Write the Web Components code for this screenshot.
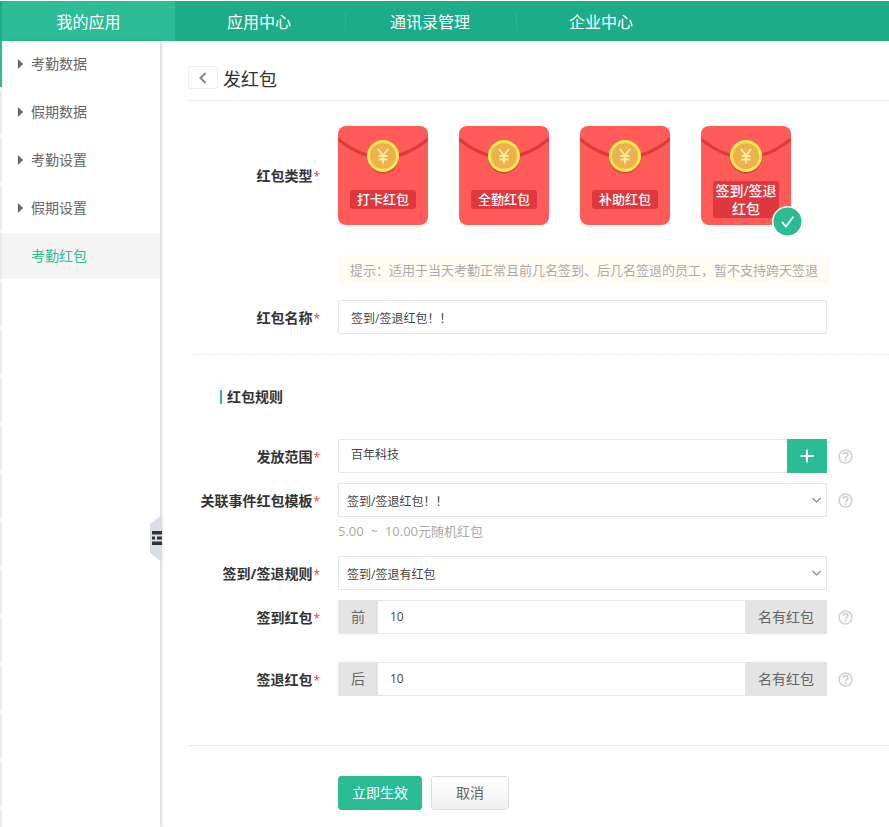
<!DOCTYPE html>
<html lang="zh">
<head>
<meta charset="utf-8">
<title>发红包</title>
<style>
html,body{margin:0;height:100%;overflow:hidden;background:#fff}
body{font:14px "Open Sans","Noto Sans CJK SC",sans-serif;color:#333}
/* centred full-width punctuation, as in the reference */
.p{font-family:"Noto Sans CJK TC",sans-serif}
</style>
</head>
<body>
<app-shell>
  <top-nav slot="nav">
    <nav-item active>我的应用</nav-item>
    <nav-item>应用中心</nav-item>
    <nav-item>通讯录管理</nav-item>
    <nav-item>企业中心</nav-item>
  </top-nav>
  <side-menu slot="menu">
    <side-item arrow>考勤数据</side-item>
    <side-item arrow>假期数据</side-item>
    <side-item arrow>考勤设置</side-item>
    <side-item arrow>假期设置</side-item>
    <side-item active>考勤红包</side-item>
  </side-menu>

  <page-head>发红包</page-head>

  <form-row label="红包类型" required style="margin-top:25px;--lab-shift:-1px">
    <div style="display:flex;gap:31px">
      <red-packet>打卡红包</red-packet>
      <red-packet>全勤红包</red-packet>
      <red-packet>补助红包</red-packet>
      <red-packet checked>签到/签退<br>红包</red-packet>
    </div>
  </form-row>
  <form-row style="margin-top:30px"><hint-box>提示<span class="p">：</span>适用于当天考勤正常且前几名签到、后几名签退的员工<span class="p">，</span>暂不支持跨天签退</hint-box></form-row>
  <form-row label="红包名称" required style="margin-top:15px"><text-field>签到/签退红包<span class="p">！！</span></text-field></form-row>
  <dash-line></dash-line>
  <section-title>红包规则</section-title>

  <form-row label="发放范围" required style="margin-top:35px">
    <text-field plus>百年科技</text-field><help-icon slot="aside"></help-icon>
  </form-row>
  <form-row label="关联事件红包模板" required style="margin-top:10px">
    <select-field>签到/签退红包<span class="p">！！</span></select-field><help-icon slot="aside"></help-icon>
  </form-row>
  <form-row style="margin-top:4px"><note-text>5.00 ~ 10.00元随机红包</note-text></form-row>
  <form-row label="签到/签退规则" required style="margin-top:15px"><select-field>签到/签退有红包</select-field></form-row>
  <form-row label="签到红包" required style="margin-top:10px">
    <addon-field before="前" after="名有红包">10</addon-field><help-icon slot="aside"></help-icon>
  </form-row>
  <form-row label="签退红包" required style="margin-top:28px">
    <addon-field before="后" after="名有红包">10</addon-field><help-icon slot="aside"></help-icon>
  </form-row>

  <form-actions>
    <action-button primary>立即生效</action-button>
    <action-button>取消</action-button>
  </form-actions>
</app-shell>

<script>
// each element: a template string put in an open shadow root
const el = (name, html) => customElements.define(name, class extends HTMLElement {
  constructor() {
    super()
    this.attachShadow({ mode: "open" })
  }
  connectedCallback() {
    this.shadowRoot.innerHTML = typeof html === "function" ? html(this) : html
  }
})

el("app-shell", `
  <style>
    :host{display:grid;grid-template-columns:164px 1fr;grid-template-rows:41px 1fr;height:827px;overflow:hidden}
    .nav{grid-column:1 / -1;display:block}
    main{padding-left:24px;min-width:0}
  </style>
  <div class="nav"><slot name="nav"></slot></div>
  <div><slot name="menu"></slot></div>
  <main><slot></slot></main>`)

el("top-nav", `
  <style>
    :host{display:flex;height:40px;margin-top:1px;padding-left:2px;background:#1cac88}
  </style>
  <slot></slot>`)

el("nav-item", t => `
  <style>
    :host{display:flex;align-items:center;justify-content:center;box-sizing:border-box;height:40px;position:relative;
      color:#fff;font-size:16px;${t.hasAttribute("active") ? "width:173px;background:#2cbd96;" : "width:171px;padding-right:3px;"}}
    :host(:nth-child(n+3))::before{content:"";position:absolute;left:-1px;top:12px;height:18px;width:1px;background:#26b893}
  </style>
  <slot></slot>`)

el("side-menu", `
  <style>
    :host{display:block;position:relative;width:160px;height:786px;box-sizing:border-box;padding-left:2px;background:#fff;
      box-shadow:2px 0 3px rgba(0,0,0,.14)}
    .strip{position:absolute;left:0;top:0;bottom:0;width:2px;
      background:linear-gradient(#2cbd96 46px,transparent 46px),repeating-linear-gradient(#e7eaef 0 46px,#fafbfc 46px 48px)}
    .tab{position:absolute;left:150px;top:474px;display:block}
  </style>
  <div class="strip"></div>
  <slot></slot>
  <svg class="tab" width="12" height="47" viewBox="0 0 12 47">
    <path d="M12 0 0 9V38L12 47Z" fill="#d9dee6"/>
    <path d="M2 16H12V19.5H2ZM2 21.5H5V24.5H2ZM7 21.5H12V24.5H7ZM2 26.5H12V30H2Z" fill="#333"/>
  </svg>`)

el("side-item", t => `
  <style>
    :host{display:block;position:relative;height:46px;margin-bottom:2px;box-sizing:border-box;padding-left:29px;line-height:45px;
      font-size:14px;color:${t.hasAttribute("active") ? "#2cbb96" : "#666"};${t.hasAttribute("active") ? "background:#f4f4f4;" : ""}}
    i{position:absolute;left:16px;top:18px;border-left:5px solid #666;border-top:5px solid transparent;border-bottom:5px solid transparent}
  </style>
  ${t.hasAttribute("arrow") ? "<i></i>" : ""}<slot></slot>`)

el("page-head", `
  <style>
    :host{display:flex;align-items:center;gap:5px;height:23px;padding:25px 0 11px;border-bottom:1px solid #eee;font-size:18px;color:#333}
    .back{flex:none;display:flex;align-items:center;justify-content:center;width:28px;height:21px;border:1px solid #eee;border-radius:2px}
  </style>
  <div class="back"><svg width="10" height="14" viewBox="0 0 10 14"><path d="M7.500 2 2.500 7l5 5" fill="none" stroke="#888" stroke-width="2"/></svg></div>
  <slot></slot>`)

el("form-row", t => `
  <style>
    :host{display:flex;align-items:center}
    .lab{flex:none;width:132px;margin:var(--lab-shift,0px) 18px 0 0;text-align:right;font-weight:700;font-size:14px;color:#333;white-space:nowrap}
    b{color:#f33;font-weight:400;font-size:12px;margin-left:1px}
    .ctl{flex:none;width:489px}
    .aside{margin-left:11px;display:flex}
  </style>
  <div class="lab">${t.getAttribute("label") || ""}${t.hasAttribute("required") ? "<b>*</b>" : ""}</div>
  <div class="ctl"><slot></slot></div>
  <div class="aside"><slot name="aside"></slot></div>`)

el("red-packet", t => {
  const two = t.hasAttribute("checked")
  return `
  <style>
    :host{display:flex;flex:none;position:relative;width:90px;height:99px;box-sizing:border-box;padding-top:48px;
      align-items:center;justify-content:center;background:#ff5b58;border-radius:8px}
    svg.art{position:absolute;left:0;top:0;display:block}
    .tag{position:relative;width:66px;box-sizing:border-box;text-align:center;background:#df373d;border-radius:3px;
      color:#fff;font-size:${two ? "14px" : "13px"};line-height:${two ? "17.5px" : "19px"};font-weight:500;white-space:nowrap;
      ${two ? "padding:1px 0" : ""}}
    .ok{position:absolute;right:-12px;bottom:-12px;display:block}
  </style>
  <svg class="art" width="90" height="99" viewBox="0 0 90 99">
    <path d="M0 13Q45 50 90 13" fill="none" stroke="#e0393b" stroke-width="3"/>
    <circle cx="45" cy="31.500" r="16" fill="#e0393b"/>
    <circle cx="45" cy="30" r="16" fill="#fdec50"/>
    <circle cx="45" cy="30" r="13" fill="#edb04f"/>
    <path d="M40 23 45 29.500 50 23M45 29.500V37.500M40.500 30H49.500M40.500 33.500H49.500" fill="none" stroke="#fdeea0" stroke-width="1.900"/>
  </svg>
  <div class="tag"><slot></slot></div>
  ${two ? `<svg class="ok" width="31" height="31" viewBox="0 0 31 31">
    <circle cx="15.500" cy="15.500" r="15.500" fill="#fff"/><circle cx="15.500" cy="15.500" r="14" fill="#2bbb95"/>
    <path d="M10 16l4 4.500 7.500-10" fill="none" stroke="#fff" stroke-width="1.800"/></svg>` : ""}`
})

el("hint-box", `
  <style>
    :host{display:block;width:492px;height:30px;box-sizing:border-box;padding-left:12px;line-height:29px;background:#fffcf3;color:#aaa;font-size:13px;white-space:nowrap}
  </style>
  <slot></slot>`)

const box = "height:34px;box-sizing:border-box;border:1px solid #e6e6e6;font-size:12px;color:#444;background:#fff;"

el("text-field", t => `
  <style>
    :host{display:flex;${box}border-radius:2px;line-height:${t.hasAttribute("plus") ? "30px" : "33px"};padding-left:12px;position:relative}
    span{flex:1}
    .plus{flex:none;width:40px;height:34px;margin:-1px -1px -1px 0;background:#2bbb95;display:flex;align-items:center;justify-content:center}
  </style>
  <span><slot></slot></span>
  ${t.hasAttribute("plus") ? `<div class="plus"><svg width="14" height="14" viewBox="0 0 14 14"><path d="M7 .5v13M.5 7h13" stroke="#fff" stroke-width="2"/></svg></div>` : ""}`)

el("select-field", `
  <style>
    :host{display:flex;align-items:center;justify-content:space-between;${box}padding:0 5px 0 8px;line-height:33px}
    span{margin-top:2px}
    svg{flex:none}
  </style>
  <span><slot></slot></span>
  <svg width="9" height="6" viewBox="0 0 9 6"><path d="M.5 1l4 4 4-4" fill="none" stroke="#888" stroke-width="1.100"/></svg>`)

el("addon-field", t => `
  <style>
    :host{display:flex;${box}line-height:32px;border-left:0;border-right:0}
    .add{flex:none;margin:-1px 0;height:34px;line-height:34px;background:#e4e4e4;text-align:center;font-size:14px;color:#666}
    .a{width:40px}.b{width:82px}
    span{flex:1;padding-left:12px}
  </style>
  <div class="add a">${t.getAttribute("before")}</div>
  <span><slot></slot></span>
  <div class="add b">${t.getAttribute("after")}</div>`)

el("help-icon", `
  <style>:host{display:block;width:15px;height:15px}svg{display:block}</style>
  <svg width="15" height="15" viewBox="0 0 15 15">
    <circle cx="7.500" cy="7.500" r="6.400" fill="none" stroke="#d9d3cf" stroke-width="1.800"/>
    <path d="M5 5.800C5.100 3 10 3 10 5.700 10 7.400 7.500 7.400 7.500 9.400" fill="none" stroke="#cfc9c5" stroke-width="1.500"/>
    <path d="M6.700 10.400H8.300V12H6.700Z" fill="#cfc9c5"/>
  </svg>`)

el("note-text", `
  <style>:host{display:block;height:20px;line-height:20px;font-size:13px;color:#aaa;word-spacing:3.500px}</style><slot></slot>`)

el("dash-line", `
  <style>:host{display:block;margin:20px 0 0 5px;border-top:1px dashed #eaeaea}</style>`)

el("section-title", `
  <style>
    :host{display:block;margin:35px 0 0 32px;padding-left:5px;border-left:2px solid #2bbb95;height:14px;line-height:14px;
      font-size:14px;font-weight:700;color:#333}
  </style>
  <slot></slot>`)

el("form-actions", `
  <style>
    :host{display:flex;gap:9px;margin-top:49px;padding:30px 0 0 150px;border-top:1px solid #e8e8e8}
  </style>
  <slot></slot>`)

el("action-button", t => `
  <style>
    :host{display:block;height:34px;box-sizing:border-box;border-radius:3px;text-align:center;font-size:14px;line-height:32px;
      ${t.hasAttribute("primary")
        ? "width:84px;background:#2bbb95;color:#fff;border:1px solid #2bbb95;"
        : "width:78px;background:linear-gradient(#fff,#efefef);color:#666;border:1px solid #ddd;"}}
  </style>
  <slot></slot>`)
</script>
</body>
</html>
